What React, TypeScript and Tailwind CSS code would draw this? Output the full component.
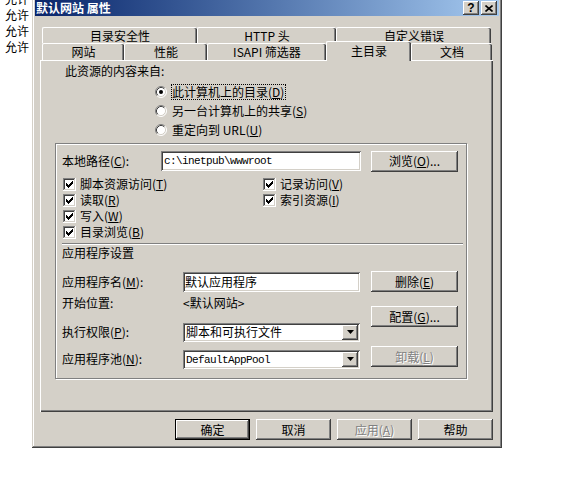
import React from "react";
import clsx from "clsx";

const FONT = '"Noto Sans CJK SC", "Noto Sans", sans-serif';
const MONO = '"Liberation Mono", "Noto Sans CJK SC", monospace';

const raised =
  "shadow-[inset_-1px_-1px_0_#404040,inset_1px_1px_0_#ffffff,inset_-2px_-2px_0_#808080,inset_2px_2px_0_#d4d0c8]";
const sunken =
  "shadow-[inset_1px_1px_0_#808080,inset_-1px_-1px_0_#ffffff,inset_2px_2px_0_#404040,inset_-2px_-2px_0_#d4d0c8]";

const Key = ({ k }: { k: string }) => (
  <>
    (<span className="underline underline-offset-1">{k}</span>)
  </>
);

const Btn = ({
  children,
  w = "w-[87px]",
  disabled,
  def,
  className,
}: {
  children: React.ReactNode;
  w?: string;
  disabled?: boolean;
  def?: boolean;
  className?: string;
}) => (
  <div
    className={clsx(
      "flex items-center justify-center h-[21px] bg-[#d4d0c8] shrink-0",
      w,
      raised,
      def && "border border-black",
      disabled && "text-[#808080] [text-shadow:1px_1px_0_#ffffff]",
      className
    )}
  >
    {children}
  </div>
);

const Check = () => (
  <svg width="13" height="13" viewBox="0 0 13 13" className="shrink-0" shapeRendering="crispEdges">
    <rect x="0" y="0" width="13" height="13" fill="#ffffff" />
    <rect x="0" y="0" width="12" height="1" fill="#808080" />
    <rect x="0" y="0" width="1" height="12" fill="#808080" />
    <rect x="1" y="1" width="10" height="1" fill="#404040" />
    <rect x="1" y="1" width="1" height="10" fill="#404040" />
    <rect x="1" y="11" width="11" height="1" fill="#d4d0c8" />
    <rect x="11" y="1" width="1" height="11" fill="#d4d0c8" />
    {[
      [3, 5],
      [4, 6],
      [5, 7],
      [6, 6],
      [7, 5],
      [8, 4],
      [9, 3],
    ].map(([x, y]) => (
      <rect key={x} x={x} y={y} width="1" height="3" fill="#000000" />
    ))}
  </svg>
);

const Radio = ({ on }: { on?: boolean }) => (
  <svg width="12" height="12" viewBox="0 0 12 12" className="shrink-0">
    <circle cx="6" cy="6" r="5" fill="#ffffff" />
    <path d="M 2.11 9.89 A 5.5 5.5 0 0 1 9.89 2.11" fill="none" stroke="#808080" strokeWidth="1" />
    <path d="M 9.89 2.11 A 5.5 5.5 0 0 1 2.11 9.89" fill="none" stroke="#ffffff" strokeWidth="1" />
    <path d="M 2.82 9.18 A 4.5 4.5 0 0 1 9.18 2.82" fill="none" stroke="#404040" strokeWidth="1" />
    <path d="M 9.18 2.82 A 4.5 4.5 0 0 1 2.82 9.18" fill="none" stroke="#d4d0c8" strokeWidth="1" />
    {on && <circle cx="6" cy="6" r="2" fill="#000000" />}
  </svg>
);

const Select = ({ value }: { value: React.ReactNode }) => (
  <div className={clsx("flex items-center w-[177px] h-[19px] bg-white p-[2px]", sunken)}>
    <div className="flex-1 pl-[1px] whitespace-nowrap">{value}</div>
    <div className={clsx("flex items-center justify-center w-[16px] h-full bg-[#d4d0c8]", raised)}>
      <svg width="7" height="4" viewBox="0 0 7 4">
        <polygon points="0,0 7,0 3.5,4" fill="#000000" />
      </svg>
    </div>
  </div>
);

const Tab = ({ label, w, h, selected }: { label: string; w: string; h: string; selected?: boolean }) => (
  <div
    className={clsx(
      "flex items-center justify-center shrink-0 bg-[#d4d0c8] border-t border-l border-white rounded-tl-[2px] rounded-tr-[2px] shadow-[inset_-1px_0_0_#404040,inset_-2px_0_0_#808080]",
      w,
      h,
      selected && "relative z-10 -mt-[2px] pb-[1px]"
    )}
  >
    {label}
  </div>
);

const CheckRow = ({ left, right }: { left: React.ReactNode; right?: React.ReactNode }) => (
  <div className="flex h-[16px] items-center pl-[7px]">
    <div className="flex items-center w-[200px] gap-[4px]">
      <Check />
      <span>{left}</span>
    </div>
    {right && (
      <div className="flex items-center gap-[4px]">
        <Check />
        <span>{right}</span>
      </div>
    )}
  </div>
);

export default function App() {
  return (
    <div
      className="flex items-start w-[586px] h-[492px] bg-white overflow-hidden text-[12px] leading-none text-black"
      style={{ fontFamily: FONT }}
    >
      {/* background text behind the dialog */}
      <div className="w-[32px] shrink-0 -mt-[9px] pl-[5px] leading-[16px]">
        <div>允许</div>
        <div>允许</div>
        <div>允许</div>
        <div>允许</div>
      </div>

      {/* dialog */}
      <div className="w-[470px] shrink-0 -mt-[3px] p-[3px] bg-[#d4d0c8] shadow-[inset_-1px_-1px_0_#404040,inset_1px_1px_0_#d4d0c8,inset_-2px_-2px_0_#808080,inset_2px_2px_0_#ffffff]">
        {/* title bar */}
        <div className="flex items-center h-[16px] bg-linear-to-r from-[#0a246a] to-[#a6caf0] pl-[1px] pr-[2px]">
          <span className="flex-1 text-white font-bold">默认网站 属性</span>
          <div className={clsx("flex items-center justify-center w-[16px] h-[14px] bg-[#d4d0c8]", raised)}>
            <span className="font-bold text-[12px] leading-none" style={{ fontFamily: '"Liberation Sans", sans-serif' }}>
              ?
            </span>
          </div>
          <div className={clsx("flex items-center justify-center w-[16px] h-[14px] ml-[2px] bg-[#d4d0c8]", raised)}>
            <svg width="8" height="7" viewBox="0 0 8 7">
              <path d="M0.5 0.5 L7.5 6.5 M7.5 0.5 L0.5 6.5" stroke="#000000" strokeWidth="1.6" />
            </svg>
          </div>
        </div>

        {/* tabs */}
        <div className="pt-[11px] pl-[7px]">
          <div className="flex h-[16px]">
            <Tab label="目录安全性" w="w-[155px]" h="h-[16px]" />
            <Tab label="HTTP 头" w="w-[139px]" h="h-[16px]" />
            <Tab label="自定义错误" w="w-[155px]" h="h-[16px]" />
          </div>
          <div className="flex h-[17px]">
            <Tab label="网站" w="w-[82px]" h="h-[17px]" />
            <Tab label="性能" w="w-[83px]" h="h-[17px]" />
            <Tab label="ISAPI 筛选器" w="w-[119px]" h="h-[17px]" />
            <Tab label="主目录" w="w-[85px]" h="h-[20px]" selected />
            <Tab label="文档" w="w-[81px]" h="h-[17px]" />
          </div>
        </div>

        {/* panel */}
        <div className="ml-[5px] w-[453px] h-[352px] border-t border-l border-white shadow-[inset_-1px_-1px_0_#404040,inset_-2px_-2px_0_#808080]">
          <div className="mt-[3px] h-[14px] flex items-center pl-[24px]">此资源的内容来自:</div>
          <div className="mt-[4px] flex items-center h-[19px] pl-[114px]">
            <Radio on />
            <span className="ml-[4px] h-[16px] flex items-center pr-[1px] border border-dotted border-black">
              此计算机上的目录<Key k="D" />
            </span>
          </div>
          <div className="flex items-center h-[19px] pl-[114px]">
            <Radio />
            <span className="ml-[5px]">
              另一台计算机上的共享<Key k="S" />
            </span>
          </div>
          <div className="flex items-center h-[19px] pl-[114px]">
            <Radio />
            <span className="ml-[5px]">
              重定向到 URL<Key k="U" />
            </span>
          </div>

          {/* group box */}
          <div className="mt-[4px] ml-[14px] w-[412px] h-[236px] border border-[#808080] shadow-[1px_1px_0_#ffffff,inset_1px_1px_0_#ffffff]">
            <div className="mt-[6px] flex items-center h-[22px] pl-[6px]">
              <span className="w-[99px]">
                本地路径<Key k="C" />:
              </span>
              <div className={clsx("flex items-center w-[200px] h-[20px] bg-white pl-[3px]", sunken)}>
                <span className="text-[11px] tracking-[-0.6px]" style={{ fontFamily: MONO }}>
                  c:\inetpub\wwwroot
                </span>
              </div>
              <Btn className="ml-[10px]">
                浏览<Key k="O" />...
              </Btn>
            </div>

            <div className="mt-[4px]">
              <CheckRow
                left={
                  <>
                    脚本资源访问<Key k="T" />
                  </>
                }
                right={
                  <>
                    记录访问<Key k="V" />
                  </>
                }
              />
              <CheckRow
                left={
                  <>
                    读取<Key k="R" />
                  </>
                }
                right={
                  <>
                    索引资源<Key k="I" />
                  </>
                }
              />
              <CheckRow
                left={
                  <>
                    写入<Key k="W" />
                  </>
                }
              />
              <CheckRow
                left={
                  <>
                    目录浏览<Key k="B" />
                  </>
                }
              />
            </div>

            <div className="mt-[3px] ml-[6px] w-[401px] h-[2px] border-t border-[#808080] border-b border-b-white" />
            <div className="h-[16px] flex items-center pl-[6px]">应用程序设置</div>

            <div className="mt-[10px] flex pl-[6px]">
              <div className="w-[298px] flex flex-col">
                <div className="flex items-center h-[22px]">
                  <span className="w-[121px]">
                    应用程序名<Key k="M" />:
                  </span>
                  <div className={clsx("flex items-center w-[177px] h-[20px] bg-white pl-[2px]", sunken)}>
                    默认应用程序
                  </div>
                </div>
                <div className="flex items-center h-[20px]">
                  <span className="w-[121px]">开始位置:</span>
                  <span>&lt;默认网站&gt;</span>
                </div>
                <div className="mt-[9px] flex items-center h-[20px]">
                  <span className="w-[121px]">
                    执行权限<Key k="P" />:
                  </span>
                  <Select value="脚本和可执行文件" />
                </div>
                <div className="mt-[7px] flex items-center h-[20px]">
                  <span className="w-[121px]">
                    应用程序池<Key k="N" />:
                  </span>
                  <Select
                    value={
                      <span className="text-[11px] tracking-[-0.6px]" style={{ fontFamily: MONO }}>
                        DefaultAppPool
                      </span>
                    }
                  />
                </div>
              </div>
              <div className="ml-[11px] flex flex-col">
                <Btn>
                  删除<Key k="E" />
                </Btn>
                <Btn className="mt-[14px]">
                  配置<Key k="G" />...
                </Btn>
                <Btn className="mt-[19px]" disabled>
                  卸载<Key k="L" />
                </Btn>
              </div>
            </div>
          </div>
        </div>

        {/* dialog buttons */}
        <div className="mt-[7px] mb-[5px] flex justify-end gap-[6px] pr-[6px]">
          <Btn w="w-[75px]" def>
            确定
          </Btn>
          <Btn w="w-[75px]">取消</Btn>
          <Btn w="w-[75px]" disabled>
            应用<Key k="A" />
          </Btn>
          <Btn w="w-[75px]">帮助</Btn>
        </div>
      </div>
    </div>
  );
}
